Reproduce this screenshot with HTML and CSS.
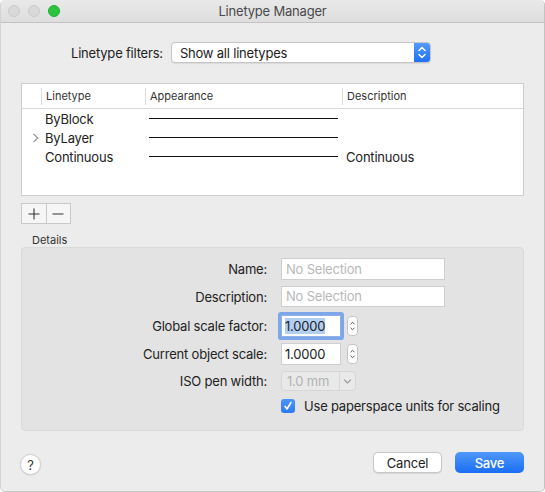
FILE: index.html
```html
<!DOCTYPE html>
<html>
<head>
<meta charset="utf-8">
<link rel="stylesheet" href="styles.css">
</head>
<body>
<div class="window">
  <div class="titlebar">
    <div class="lights">
      <span class="light grey"></span>
      <span class="light grey"></span>
      <span class="light green"></span>
    </div>
    <div class="title">Linetype Manager</div>
    <div></div>
  </div>
  <div class="content">
    <div class="filters">
      <span class="label">Linetype filters:</span>
      <div class="select">
        <span class="select-text">Show all linetypes</span>
        <span class="select-arrows">
          <svg width="16" height="21" viewBox="0 0 16 21"><path d="M5 8.5 L8 5.5 L11 8.5 M5 12.5 L8 15.5 L11 12.5" fill="none" stroke="#fff" stroke-width="1.5" stroke-linecap="round" stroke-linejoin="round"/></svg>
        </span>
      </div>
    </div>

    <div class="table">
      <div class="thead">
        <div class="th first"></div>
        <div class="th">Linetype</div>
        <div class="th">Appearance</div>
        <div class="th">Description</div>
      </div>
      <div class="tbody">
        <div class="tr">
          <div class="td"></div>
          <div class="td">ByBlock</div>
          <div class="td"><div class="lineart"></div></div>
          <div class="td"></div>
        </div>
        <div class="tr">
          <div class="td disc"><svg width="8" height="10" viewBox="0 0 8 10"><path d="M1.5 0.8 L5.8 5 L1.5 9.2" fill="none" stroke="#8c8c8c" stroke-width="1.1"/></svg></div>
          <div class="td">ByLayer</div>
          <div class="td"><div class="lineart"></div></div>
          <div class="td"></div>
        </div>
        <div class="tr">
          <div class="td"></div>
          <div class="td">Continuous</div>
          <div class="td"><div class="lineart"></div></div>
          <div class="td">Continuous</div>
        </div>
      </div>
    </div>

    <div class="plusminus">
      <span class="pm">
        <svg width="12" height="12" viewBox="0 0 12 12"><path d="M6 0.5 V11.5 M0.5 6 H11.5" stroke="#333" stroke-width="1.1"/></svg>
      </span>
      <span class="pm">
        <svg width="12" height="12" viewBox="0 0 12 12"><path d="M0.5 6 H11.5" stroke="#333" stroke-width="1.1"/></svg>
      </span>
    </div>

    <div class="details-label">Details</div>
    <div class="details">
      <div class="frow r-name">
        <span class="flabel">Name:</span>
        <div class="input wide placeholder">No Selection</div>
      </div>
      <div class="frow r-desc">
        <span class="flabel">Description:</span>
        <div class="input wide placeholder">No Selection</div>
      </div>
      <div class="frow r-global">
        <span class="flabel">Global scale factor:</span>
        <div class="fctrl">
          <div class="input num focused"><span class="sel">1.0000</span></div>
          <span class="stepper">
            <svg width="11" height="20" viewBox="0 0 11 20"><path d="M3.5 7.5 L5.5 5.5 L7.5 7.5 M3.5 12.5 L5.5 14.5 L7.5 12.5" fill="none" stroke="#444" stroke-width="1.1" stroke-linecap="round" stroke-linejoin="round"/></svg>
          </span>
        </div>
      </div>
      <div class="frow r-current">
        <span class="flabel">Current object scale:</span>
        <div class="fctrl">
          <div class="input num">1.0000</div>
          <span class="stepper">
            <svg width="11" height="20" viewBox="0 0 11 20"><path d="M3.5 7.5 L5.5 5.5 L7.5 7.5 M3.5 12.5 L5.5 14.5 L7.5 12.5" fill="none" stroke="#444" stroke-width="1.1" stroke-linecap="round" stroke-linejoin="round"/></svg>
          </span>
        </div>
      </div>
      <div class="frow r-iso">
        <span class="flabel">ISO pen width:</span>
        <div class="popup">
          <span class="popup-text">1.0 mm</span>
          <span class="popup-arrow">
            <svg width="15" height="19" viewBox="0 0 15 19"><path d="M4.5 8 L7.5 11 L10.5 8" fill="none" stroke="#9a9a9a" stroke-width="1.1" stroke-linecap="round" stroke-linejoin="round"/></svg>
          </span>
        </div>
      </div>
      <div class="frow r-check">
        <span class="flabel"></span>
        <div class="check-wrap">
          <span class="checkbox">
            <svg width="14" height="14" viewBox="0 0 14 14"><path d="M4 7.3 L6 10 L10 3.5" fill="none" stroke="#fff" stroke-width="1.6" stroke-linecap="round" stroke-linejoin="round"/></svg>
          </span>
          <span class="check-label">Use paperspace units for scaling</span>
        </div>
      </div>
    </div>

    <div class="footer">
      <span class="help">?</span>
      <div class="actions">
        <span class="btn cancel">Cancel</span>
        <span class="btn save">Save</span>
      </div>
    </div>
  </div>
</div>
</body>
</html>
```
FILE: styles.css
```css
* { box-sizing: border-box; }
html, body { margin: 0; padding: 0; background: #ffffff; }
body {
  font-family: Inter, "Noto Sans", sans-serif;
  font-size: 13px;
  letter-spacing: -0.2px;
  color: #222222;
}
.window {
  width: 545px;
  height: 492px;
  background: #ececec;
  border-radius: 5px;
  overflow: hidden;
  border-left: 1px solid #d4d4d4;
  border-right: 1px solid #c4c4c4;
  border-bottom: 1px solid #c8c8c8;
}
.titlebar {
  height: 23px;
  display: grid;
  grid-template-columns: 1fr auto 1fr;
  align-items: center;
  background: linear-gradient(#e9e9e9, #dedede);
  border-bottom: 1px solid #c2c2c2;
}
.lights { display: flex; gap: 8px; padding-left: 7px; }
.light {
  width: 12px; height: 12px; border-radius: 50%;
  display: inline-block;
}
.light.grey { background: #d9d9d9; border: 1px solid #c9c9c9; }
.light.green { background: #2ac43f; border: 1px solid #22ad33; }
.title { font-size: 13px; color: #4a4a4a; }

.content { padding: 0 20px; }

.filters {
  display: flex;
  align-items: center;
  gap: 8px;
  margin-top: 19px;
  padding-left: 50px;
  height: 21px;
}
.label { font-size: 13px; }
.select {
  width: 260px;
  height: 21px;
  display: flex;
  align-items: center;
  background: #fff;
  border: 1px solid #c6c6c6;
  border-radius: 4px;
  overflow: hidden;
  box-shadow: 0 0.5px 1px rgba(0,0,0,0.08);
}
.select-text { flex: 1; padding-left: 8px; }
.select-arrows {
  width: 16px; height: 21px;
  background: linear-gradient(#5a9dfa, #1b6ff4);
  display: flex;
}

.table {
  margin-top: 20px;
  height: 113px;
  background: #fff;
  border: 1px solid #cdcdcd;
}
.thead, .tr {
  display: grid;
  grid-template-columns: 19px 104px 197px 1fr;
}
.thead {
  height: 25px;
  border-bottom: 1px solid #d9d9d9;
  align-items: center;
}
.th {
  font-size: 11px;
  letter-spacing: 0;
  color: #333;
  padding-left: 4px;
  border-left: 1px solid #dcdcdc;
  height: 17px;
  line-height: 17px;
}
.th.first { border-left: none; }
.tbody { padding-top: 0; }
.tr { height: 19px; align-items: center; }
.td { padding-left: 4px; white-space: nowrap; }
.td.disc { padding-left: 10px; display: flex; align-items: center; }
.lineart {
  height: 1px;
  background: #111;
  margin-right: 4px;
  margin-top: -1px;
}

.plusminus {
  margin-top: 7px;
  display: flex;
  width: 50px;
  height: 21px;
  border: 1px solid #c9c9c9;
  background: #f6f6f6;
}
.pm {
  flex: 1;
  display: flex;
  align-items: center;
  justify-content: center;
}
.pm + .pm { border-left: 1px solid #c9c9c9; }

.details-label {
  margin-top: 9px;
  padding-left: 11px;
  font-size: 11px;
  letter-spacing: 0;
  line-height: 14px;
  height: 14px;
  color: #333;
}
.details {
  height: 184px;
  background: #e3e3e3;
  border: 1px solid #dadada;
  border-radius: 4px;
  padding-top: 10px;
}
.frow {
  display: grid;
  grid-template-columns: 245px auto;
  column-gap: 14px;
  align-items: center;
}
.flabel { text-align: right; }
.r-name { height: 22px; }
.r-desc { height: 21px; margin-top: 6px; }
.r-global { height: 22px; margin-top: 8px; }
.r-current { height: 22px; margin-top: 6px; }
.r-iso { height: 20px; margin-top: 6px; }
.r-check { height: 14px; margin-top: 7px; }

.input {
  background: #fff;
  border: 1px solid #cfcfcf;
  height: 22px;
  line-height: 20px;
  padding-left: 4px;
}
.input.wide { width: 164px; height: 22px; }
.r-desc .input.wide { height: 21px; line-height: 19px; }
.placeholder { color: #b8b8b8; }
.fctrl { display: flex; align-items: center; gap: 6px; }
.input.num { width: 60px; color: #222; padding-left: 3px; }
.input.focused {
  border-color: #8db0e8;
  border-radius: 1px;
  box-shadow: 0 0 0 3px #7ea6ea;
}
.sel { background: #b2cff3; }
.stepper {
  width: 11px;
  height: 20px;
  background: #fff;
  border: 1px solid #c4c4c4;
  border-radius: 4px;
  display: flex;
  align-items: center;
  justify-content: center;
}
.stepper svg { display: block; }

.popup {
  width: 75px;
  height: 20px;
  display: flex;
  border: 1px solid #d7d7d7;
  border-radius: 4px;
  background: #e9e9e9;
}
.popup-text {
  width: 59px;
  line-height: 18px;
  padding-left: 5px;
  color: #b3b3b3;
  border-right: 1px solid #d7d7d7;
}
.popup-arrow { flex: 1; display: flex; }

.check-wrap { display: flex; align-items: center; gap: 9px; }
.checkbox {
  width: 14px; height: 14px;
  border-radius: 3px;
  background: linear-gradient(#4d93f8, #2b7cf5);
  display: flex;
}
.check-label { font-size: 13px; }

.footer {
  margin-top: 21px;
  display: flex;
  align-items: flex-start;
  justify-content: space-between;
}
.help {
  width: 21px; height: 21px;
  margin-top: 2px;
  margin-left: -1px;
  border-radius: 50%;
  background: #fff;
  border: 1px solid #cfcfcf;
  box-shadow: 0 0.5px 1px rgba(0,0,0,0.12);
  display: flex;
  align-items: center;
  justify-content: center;
  font-size: 13px;
  color: #333;
}
.actions { display: flex; gap: 13px; }
.btn {
  width: 69px;
  height: 21px;
  display: flex;
  align-items: center;
  justify-content: center;
  border-radius: 5px;
  font-size: 13px;
}
.cancel {
  background: #fff;
  border: 1px solid #c8c8c8;
  box-shadow: 0 0.5px 1px rgba(0,0,0,0.1);
  color: #222;
}
.save {
  background: linear-gradient(#4f97f9, #1a6ef5);
  color: #fff;
  font-weight: 500;
}
```
